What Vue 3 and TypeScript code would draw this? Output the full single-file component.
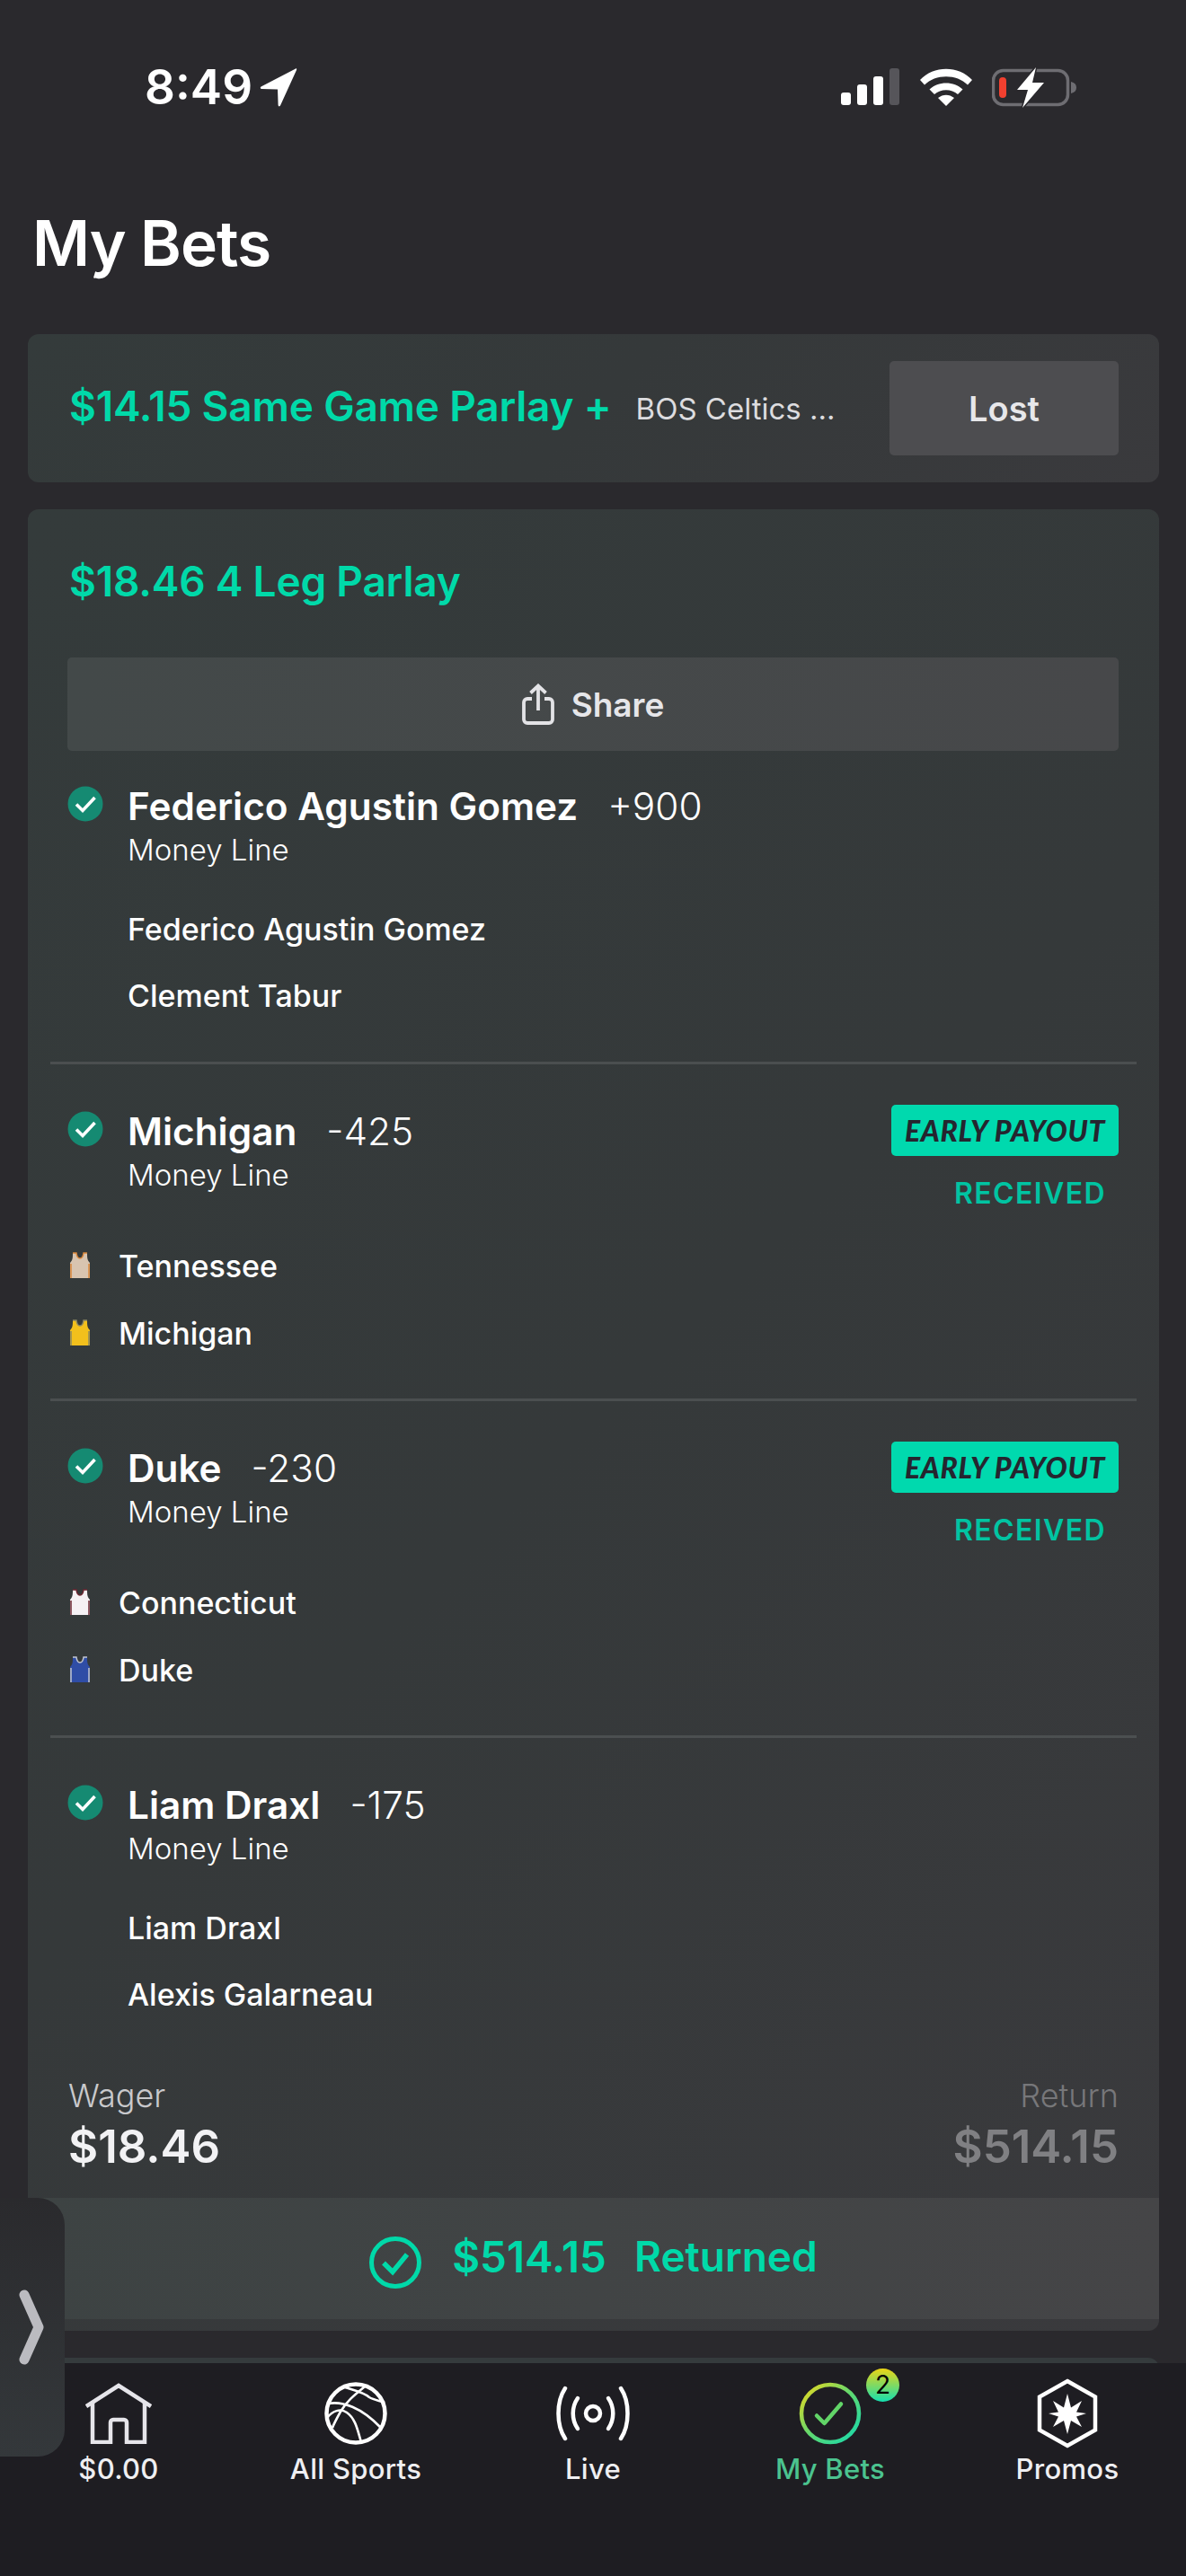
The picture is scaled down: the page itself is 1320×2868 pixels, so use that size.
<script setup lang="ts">
interface Leg {
  name: string
  odds: string
  early: boolean
  teams: { name: string; body?: string; trim?: string }[]
}
const legs: Leg[] = [
  { name: 'Federico Agustin Gomez', odds: '+900', early: false, teams: [{ name: 'Federico Agustin Gomez' }, { name: 'Clement Tabur' }] },
  { name: 'Michigan', odds: '-425', early: true, teams: [{ name: 'Tennessee', body: '#d8c4b0', trim: '#d9863a' }, { name: 'Michigan', body: '#f2c01c', trim: '#8a8660' }] },
  { name: 'Duke', odds: '-230', early: true, teams: [{ name: 'Connecticut', body: '#f5f1f4', trim: '#6b2630' }, { name: 'Duke', body: '#2f4da6', trim: '#c3c6d0' }] },
  { name: 'Liam Draxl', odds: '-175', early: false, teams: [{ name: 'Liam Draxl' }, { name: 'Alexis Galarneau' }] }
]
const navItems = [
  { label: '$0.00', icon: 'home' },
  { label: 'All Sports', icon: 'ball' },
  { label: 'Live', icon: 'live' },
  { label: 'My Bets', icon: 'bets' },
  { label: 'Promos', icon: 'promo' }
]
</script>

<template>
  <div class="phone">
    <header class="status">
      <div class="clock">
        <span>8:49</span>
        <svg width="42" height="44" viewBox="0 0 42 44"><path d="M40 1.500 1.500 21.500c-1.200.8-.8 2.400.7 2.400L20 24.500l.6 17.600c.1 1.500 1.800 1.800 2.400.5L41 3c.5-1.200 0-2-1-1.500z" fill="#fff"/></svg>
      </div>
      <div class="status-icons">
        <svg width="66" height="42" viewBox="0 0 66 42">
          <rect x="0" y="27" width="11" height="14" rx="3" fill="#fff"/>
          <rect x="18" y="18" width="11" height="23" rx="3" fill="#fff"/>
          <rect x="36" y="9" width="11" height="32" rx="3" fill="#fff"/>
          <rect x="54" y="0" width="11" height="41" rx="3" fill="#56555a"/>
        </svg>
        <svg width="58" height="42" viewBox="0 0 58 42">
          <path d="M0 13C15-3.500 43-3.500 58 13l-5 5.500C41 6 17 6 5 18.500z" fill="#fff"/>
          <path d="M10.500 23.500C20 14 38 14 47.500 23.500L42 29C35 22.500 23 22.500 16 29z" fill="#fff"/>
          <path d="M20 33c5.500-4.500 12.500-4.500 18 0L29 42z" fill="#fff"/>
        </svg>
        <svg width="94" height="46" viewBox="0 0 94 46">
          <rect x="1.500" y="4.500" width="83" height="38" rx="11" fill="none" stroke="#6e6d72" stroke-width="3.500"/>
          <rect x="8" y="12" width="8" height="23" rx="4" fill="#f2402f"/>
          <path d="M88 17c4 1 6 3 6 6.500s-2 5.500-6 6.500z" fill="#6e6d72"/>
          <path d="M49 1 28 26h12L34 46l24-28H45L49 1z" fill="#fff" stroke="#2a292d" stroke-width="3" paint-order="stroke"/>
        </svg>
      </div>
    </header>

    <h1 class="page-title">My Bets</h1>

    <main class="feed">
      <section class="card summary">
        <span class="summary-title">$14.15 Same Game Parlay +</span>
        <span class="summary-sub">BOS Celtics ...</span>
        <button class="lost">Lost</button>
      </section>

      <section class="card parlay">
        <h2 class="parlay-title">$18.46 4 Leg Parlay</h2>
        <button class="share">
          <svg width="36" height="46" viewBox="0 0 36 46" fill="none" stroke="#e3e3e6" stroke-width="3.800">
            <path d="M18 3v27M9.500 10.500 18 2.500l8.500 8"/>
            <path d="M11 17H6a4 4 0 0 0-4 4v19a4 4 0 0 0 4 4h24a4 4 0 0 0 4-4V21a4 4 0 0 0-4-4h-5"/>
          </svg>
          <span>Share</span>
        </button>

        <article v-for="(leg, i) in legs" :key="leg.name" class="leg" :class="{ ruled: i < legs.length - 1, opener: i === 0, last: i === legs.length - 1 }">
          <div class="leg-head">
            <svg class="tick" width="40" height="40" viewBox="0 0 40 40">
              <circle cx="20" cy="20" r="19.500" fill="#158a72"/>
              <path d="M10 20.500l7 7L30.500 13" fill="none" stroke="#fff" stroke-width="3.600"/>
            </svg>
            <div class="leg-text">
              <div class="leg-title"><strong>{{ leg.name }}</strong><span>{{ leg.odds }}</span></div>
              <div class="leg-market">Money Line</div>
            </div>
            <div v-if="leg.early" class="early">
              <span class="badge">EARLY PAYOUT</span>
              <span class="received">RECEIVED</span>
            </div>
          </div>
          <ul class="teams" :class="{ jersey: !!leg.teams[0].body }">
            <li v-for="t in leg.teams" :key="t.name">
              <svg v-if="t.body" width="22" height="30" viewBox="0 0 22 30">
                <path d="M3 1h4c.5 4 2 6 4 6s3.500-2 4-6h4c0 5 0 8 3 11v17H0V12c3-3 3-6 3-11z" :fill="t.body"/>
                <path d="M3 1h4c.5 4 2 6 4 6s3.500-2 4-6h4" fill="none" :stroke="t.trim" stroke-width="1.500"/>
                <path d="M1 13v16M21 13v16" :stroke="t.trim" stroke-width="1.500"/>
              </svg>
              <span>{{ t.name }}</span>
            </li>
          </ul>
        </article>

        <div class="totals">
          <div><div class="tot-label">Wager</div><div class="tot-value">$18.46</div></div>
          <div class="right"><div class="tot-label dim">Return</div><div class="tot-value dim">$514.15</div></div>
        </div>

        <div class="returned">
          <svg width="58" height="58" viewBox="0 0 58 58" fill="none" stroke="#00d9a9">
            <circle cx="29" cy="29" r="26.500" stroke-width="5"/>
            <path d="M16 29.500l10 10L42 20" stroke-width="5.500"/>
          </svg>
          <span class="ret-amt">$514.15</span>
          <span class="ret-word">Returned</span>
        </div>
      </section>

      <section class="card next"></section>
    </main>

    <nav class="tabs">
      <div v-for="item in navItems" :key="item.label" class="tab" :class="{ active: item.icon === 'bets' }">
        <div class="tab-icon">
          <svg v-if="item.icon === 'home'" width="74" height="68" viewBox="0 0 74 68" fill="none" stroke="#e6e5ea" stroke-width="4.500">
            <path d="M1 26 37 3l36 23"/>
            <path d="M8 22v44h20V44a3 3 0 0 1 3-3h12a3 3 0 0 1 3 3v22h20V22"/>
          </svg>
          <svg v-else-if="item.icon === 'ball'" width="70" height="70" viewBox="0 0 70 70" fill="none" stroke="#fff">
            <circle cx="35" cy="35" r="32.500" stroke-width="4.500"/>
            <g stroke-width="2.600">
              <path d="M23 6c9 3 20 5 27 11 5 3 12 4 17 6"/>
              <path d="M45 5C34 14 25 21 18 33c-5 9-8 15-9 18"/>
              <path d="M4 24c16-3 37 4 59 27"/>
              <path d="M3 40c6-8 15-11 22-6 10 7 12 20 16 33"/>
            </g>
          </svg>
          <svg v-else-if="item.icon === 'live'" width="84" height="62" viewBox="0 0 84 62" fill="none" stroke="#fff" stroke-linecap="round" stroke-width="4.500">
            <circle cx="42" cy="31" r="8"/>
            <path d="M25 14c-7 10-7 24 0 34M59 14c7 10 7 24 0 34"/>
            <path d="M11 3C1 18 1 44 11 59M73 3c10 15 10 41 0 56"/>
          </svg>
          <template v-else-if="item.icon === 'bets'">
            <svg width="70" height="70" viewBox="0 0 70 70" fill="none">
              <defs>
                <linearGradient id="betGrad" x1="0" y1="0" x2="1" y2="1">
                  <stop offset="0" stop-color="#f0d81c"/>
                  <stop offset=".5" stop-color="#5fd870"/>
                  <stop offset="1" stop-color="#14d9b0"/>
                </linearGradient>
              </defs>
              <circle cx="35" cy="35" r="32" stroke="url(#betGrad)" stroke-width="4.500"/>
              <path d="M20 37.500 28.500 46 47 24.500" stroke="#62d568" stroke-width="4.500" stroke-linecap="round" stroke-linejoin="round"/>
            </svg>
            <span class="count">2</span>
          </template>
          <svg v-else width="68" height="78" viewBox="0 0 68 78">
            <path d="M34 3 65 20.500v37L34 75 3 57.500v-37z" fill="none" stroke="#fff" stroke-width="4.500"/>
            <path d="M34 17l4 15.500L50 25l-6 12.500L55 39l-11 3.500L50 54l-12-7L34 62l-4-15-12 7 6-11.500L13 39l11-1.500L18 25l12 7.500z" fill="#fff"/>
          </svg>
        </div>
        <span class="tab-label">{{ item.label }}</span>
      </div>
    </nav>

    <aside class="side-tab">
      <svg width="28" height="84" viewBox="0 0 28 84" fill="none" stroke="#bbbbc0" stroke-width="11" stroke-linecap="round" stroke-linejoin="round">
        <path d="M6 6 22 42 6 78"/>
      </svg>
    </aside>
  </div>
</template>

<style>
html, body { margin: 0; background: #2a292d; }
</style>

<style scoped>
.phone {
  position: relative;
  width: 1320px;
  height: 2868px;
  display: flex;
  flex-direction: column;
  overflow: hidden;
  background: #2a292d;
  color: #fff;
  font-family: Inter, "Liberation Sans", sans-serif;
}
.status {
  height: 190px;
  flex: none;
  display: flex;
  justify-content: space-between;
  align-items: flex-start;
  padding: 72px 122px 0 161px;
  box-sizing: border-box;
}
.clock {
  display: flex;
  align-items: center;
  gap: 8px;
  font-size: 53px;
  font-weight: 600;
  line-height: 50px;
}
.status-icons { display: flex; align-items: center; gap: 22px; margin-top: 2px; }
.page-title {
  margin: 0;
  padding-left: 36px;
  font-size: 69.500px;
  font-weight: 600;
  line-height: 162px;
  height: 182px;
  flex: none;
  letter-spacing: -1px;
}
.feed {
  flex: 1;
  min-height: 0;
  overflow: hidden;
  padding: 0 30px 0 31px;
  display: flex;
  flex-direction: column;
  gap: 30px;
}
.card {
  flex: none;
  border-radius: 12px;
  background: linear-gradient(135deg, #343b3b 0%, #35393a 50%, #3a3a3d 100%);
  overflow: hidden;
}
.summary {
  height: 165px;
  display: flex;
  align-items: center;
  padding: 0 45px 0 46px;
  box-sizing: border-box;
}
.summary-title { font-size: 46px; font-weight: 600; color: #00d9a9; letter-spacing: -.2px; white-space: nowrap; margin-top: -5px; }
.summary-sub { font-size: 33px; color: #dcdcdf; margin-left: 27px; white-space: nowrap; }
.lost {
  margin-left: auto;
  width: 255px;
  height: 105px;
  border: 0;
  border-radius: 5px;
  background: #4d4d50;
  color: #e7e7ea;
  font: 600 38px Inter, sans-serif;
}
.parlay {
  height: 2028px;
  padding: 0 45px 0 44px;
  box-sizing: border-box;
  display: flex;
  flex-direction: column;
}
.parlay-title {
  margin: 0;
  height: 165px;
  padding-left: 2px;
  font-size: 46px;
  font-weight: 600;
  line-height: 160px;
  color: #00d9a9;
  letter-spacing: -.2px;
  flex: none;
}
.share {
  height: 104px;
  flex: none;
  border: 0;
  border-radius: 5px;
  background: linear-gradient(90deg, #434949, #47484a);
  color: #e6e6e9;
  font: 600 37px Inter, sans-serif;
  display: flex;
  align-items: center;
  justify-content: center;
  gap: 19px;
}
.leg {
  flex: none;
  height: 375px;
  box-sizing: border-box;
  padding-top: 50px;
  position: relative;
}
.leg.opener { height: 349px; padding-top: 37px; }
.leg.last { height: auto; }
.ruled::after {
  content: "";
  position: absolute;
  left: -19px;
  right: -20px;
  bottom: 0;
  height: 3px;
  background: #4b4f50;
}
.leg-head { display: flex; align-items: flex-start; }
.tick { flex: none; margin-right: 27px; margin-top: 2px; }
.leg-text { flex: 1; min-width: 0; }
.leg-title { font-size: 42.300px; line-height: 50px; display: flex; align-items: baseline; gap: 33px; }
.leg-title strong { font-weight: 600; }
.leg-title span { font-weight: 300; }
.leg-market { font-size: 33px; line-height: 40px; margin-top: 3px; font-weight: 300; }
.early { display: flex; flex-direction: column; align-items: flex-end; margin-top: -5px; }
.badge {
  width: 253px;
  height: 57px;
  border-radius: 5px;
  background: #00d9ae;
  color: #25252f;
  font: italic 900 32px Lato, sans-serif;
  letter-spacing: .7px;
  line-height: 57px;
  text-align: center;
}
.received {
  margin: 22px 14px 0 0;
  font-size: 32px;
  font-weight: 600;
  line-height: 40px;
  color: #00c4a2;
  letter-spacing: 1.4px;
}
.teams {
  list-style: none;
  margin: 48px 0 0;
  padding: 0 0 0 67px;
  display: flex;
  flex-direction: column;
  gap: 34px;
}
.teams.jersey { padding-left: 3px; margin-top: 40px; gap: 35px; }
.teams li {
  display: flex;
  align-items: center;
  gap: 32px;
  height: 40px;
  font-size: 34px;
  font-weight: 500;
}
.totals {
  display: flex;
  justify-content: space-between;
  padding: 9px 0 0 1px;
  height: 143px;
  margin-top: auto;
  box-sizing: border-box;
  flex: none;
}
.right { text-align: right; }
.tot-label { font-size: 36px; line-height: 40px; font-weight: 300; color: #c9c9cc; }
.tot-label.dim { color: #77777a; }
.tot-value { font-size: 51px; font-weight: 600; line-height: 60px; margin-top: 7px; color: #f2f2f4; }
.tot-value.dim { color: #808083; }
.returned {
  flex: none;
  height: 135px;
  margin: 0 -45px 13px -44px;
  padding-bottom: 5px;
  box-sizing: border-box;
  background: linear-gradient(90deg, #3d4343, #454547);
  display: flex;
  align-items: center;
  justify-content: center;
  gap: 31px;
  color: #00d9a9;
  font-size: 47.500px;
  font-weight: 600;
}
.returned svg { margin-top: 14px; margin-right: 3px; }
.returned .ret-word { font-size: 46px; }
.next { height: 200px; background: #353b3d; }
.tabs {
  flex: none;
  height: 237px;
  background: #1e1d22;
  display: grid;
  grid-template-columns: repeat(5, 264px);
  justify-content: center;
  position: relative;
  z-index: 1;
}
.tab { display: flex; flex-direction: column; align-items: center; padding-top: 18px; }
.tab-icon { position: relative; height: 76px; display: flex; align-items: center; justify-content: center; }
.tab-label { margin-top: 4px; font-size: 31px; line-height: 40px; font-weight: 500; color: #efeff2; letter-spacing: .3px; }
.active .tab-label { color: #4bc38f; }
.count {
  position: absolute;
  top: -12px;
  right: -42px;
  width: 37px;
  height: 37px;
  border-radius: 50%;
  background: linear-gradient(180deg, #ecd514, #14deb0);
  color: #000;
  font-size: 28px;
  line-height: 37px;
  text-align: center;
}
.side-tab {
  position: absolute;
  left: 0;
  top: 2447px;
  width: 72px;
  height: 288px;
  z-index: 2;
  border-radius: 0 30px 30px 0;
  background: linear-gradient(180deg, #2a2a2d, #34383b);
  display: flex;
  align-items: center;
  padding-left: 21px;
  box-sizing: border-box;
}
</style>
